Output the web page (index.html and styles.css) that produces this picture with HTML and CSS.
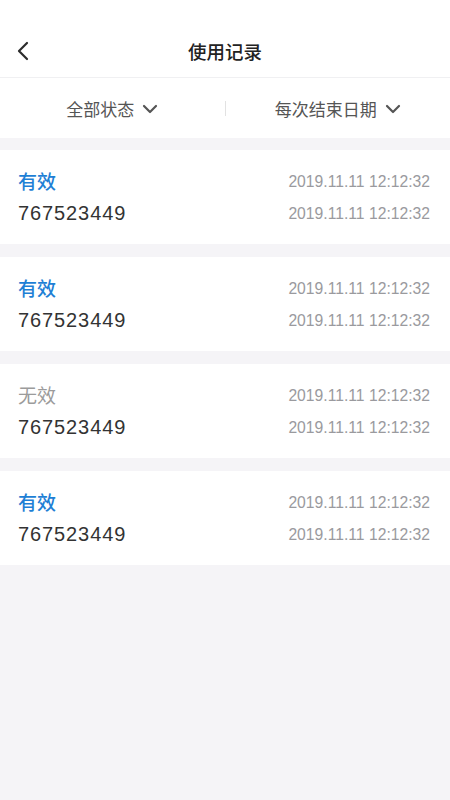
FILE: index.html
```html
<!DOCTYPE html>
<html lang="zh-CN">
<head>
    <meta charset="UTF-8">
    <meta name="viewport" content="width=device-width, initial-scale=1.0">
    <title>使用记录</title>
    <link rel="stylesheet" href="styles.css">
</head>
<body>
    <div class="page">
        <header class="nav">
            <div class="nav-bar">
                <span class="back">
                    <svg width="14" height="20" viewBox="0 0 14 20"><path d="M11 2 L3 10 L11 18" fill="none" stroke="#2b2b2b" stroke-width="2.2" stroke-linecap="round" stroke-linejoin="round"/></svg>
                </span>
                <h1 class="title">使用记录</h1>
                <span></span>
            </div>
        </header>

        <div class="filters">
            <div class="filter">
                <span>全部状态</span>
                <svg width="16" height="10" viewBox="0 0 16 10"><path d="M2 2 L8 8 L14 2" fill="none" stroke="#555" stroke-width="2.2" stroke-linecap="round" stroke-linejoin="round"/></svg>
            </div>
            <div class="divider"></div>
            <div class="filter">
                <span>每次结束日期</span>
                <svg width="16" height="10" viewBox="0 0 16 10"><path d="M2 2 L8 8 L14 2" fill="none" stroke="#555" stroke-width="2.2" stroke-linecap="round" stroke-linejoin="round"/></svg>
            </div>
        </div>

        <div class="records">
            <div class="record">
                <div class="row"><span class="status valid">有效</span><span class="date">2019.11.11 12:12:32</span></div>
                <div class="row"><span class="code">767523449</span><span class="date">2019.11.11 12:12:32</span></div>
            </div>
            <div class="record">
                <div class="row"><span class="status valid">有效</span><span class="date">2019.11.11 12:12:32</span></div>
                <div class="row"><span class="code">767523449</span><span class="date">2019.11.11 12:12:32</span></div>
            </div>
            <div class="record">
                <div class="row"><span class="status invalid">无效</span><span class="date">2019.11.11 12:12:32</span></div>
                <div class="row"><span class="code">767523449</span><span class="date">2019.11.11 12:12:32</span></div>
            </div>
            <div class="record">
                <div class="row"><span class="status valid">有效</span><span class="date">2019.11.11 12:12:32</span></div>
                <div class="row"><span class="code">767523449</span><span class="date">2019.11.11 12:12:32</span></div>
            </div>
        </div>
    </div>
</body>
</html>
```

FILE: styles.css
```css
body {
    margin: 0;
    background-color: #f5f4f7;
    font-family: "Noto Sans", "Noto Sans CJK SC", sans-serif;
    color: #333;
}
.page {
    min-height: 800px;
}
.nav {
    background-color: #fff;
    padding-top: 25px;
}
.nav-bar {
    height: 52px;
    display: grid;
    grid-template-columns: 1fr auto 1fr;
    align-items: center;
    padding: 0 16px;
}
.back {
    display: flex;
    align-items: center;
}
.title {
    margin: 0;
    font-size: 18.5px;
    font-weight: 500;
    color: #222;
}
.filters {
    height: 60px;
    background-color: #fff;
    border-top: 1px solid #f0f0f2;
    display: flex;
    align-items: center;
}
.filter {
    flex: 1;
    display: flex;
    justify-content: center;
    align-items: center;
    gap: 8px;
    font-size: 17px;
    color: #555;
}
.filter svg {
    margin-top: 1px;
}
.divider {
    width: 1px;
    height: 15px;
    background-color: #e2e2e2;
}
.records {
    padding-top: 12px;
    display: flex;
    flex-direction: column;
    gap: 13px;
}
.record {
    background-color: #fff;
    padding: 15px 20px 15px 18px;
}
.row {
    display: flex;
    justify-content: space-between;
    align-items: center;
    height: 32px;
}
.status {
    font-size: 19px;
    font-weight: 500;
}
.valid {
    color: #1e7fd5;
}
.invalid {
    color: #9b9b9b;
    font-weight: 400;
}
.code {
    font-family: "Liberation Sans", sans-serif;
    font-size: 20px;
    letter-spacing: 0.9px;
    color: #333;
}
.date {
    font-family: "Liberation Sans", sans-serif;
    font-size: 15.7px;
    padding-top: 2px;
    color: #9a9a9e;
}
```
